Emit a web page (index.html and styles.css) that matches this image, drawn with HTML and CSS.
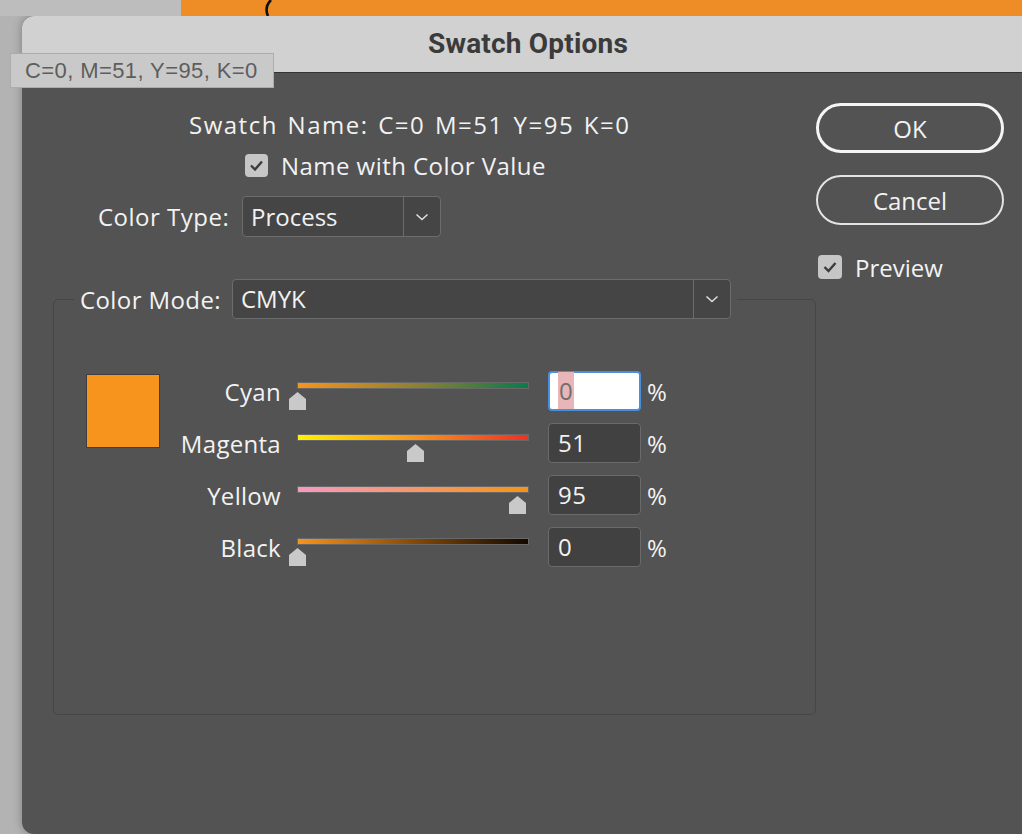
FILE: index.html
```html
<!DOCTYPE html>
<html lang="en">
<head>
    <meta charset="UTF-8">
    <title>Swatch Options</title>
    <link rel="stylesheet" href="styles.css">
</head>
<body>
    <div class="desk">
        <div class="desk-gap"></div>
        <div class="desk-doc">
            <svg width="12" height="16" viewBox="0 0 12 16"><path d="M8 0 Q1 7 5 16" fill="none" stroke="#111" stroke-width="2.6"/></svg>
        </div>
    </div>

    <div class="tooltip">C=0, M=51, Y=95, K=0</div>

    <div class="dialog">
        <div class="titlebar">Swatch Options</div>
        <div class="dialog-body">
            <div class="main">
                <div class="name-row">Swatch Name: C=0 M=51 Y=95 K=0</div>
                <div class="check-row">
                    <span class="check-box"><svg width="23" height="23" viewBox="0 0 23 23"><path d="M6 11.5 L10 15.5 L17 7.5" fill="none" stroke="#3c3c3c" stroke-width="2.4"/></svg></span>
                    <span>Name with Color Value</span>
                </div>
                <div class="type-row">
                    <span class="type-label">Color Type:</span>
                    <div class="select select-type">
                        <span class="select-value">Process</span>
                        <span class="select-arrow"><svg width="14" height="8" viewBox="0 0 14 8"><polyline points="1.5,1.5 7,6.5 12.5,1.5" fill="none" stroke="#dcdcdc" stroke-width="1.6"/></svg></span>
                    </div>
                </div>

                <fieldset class="mode">
                    <legend>
                        <div class="legend-inner">
                            <span class="mode-label">Color Mode:</span>
                            <div class="select select-mode">
                                <span class="select-value">CMYK</span>
                                <span class="select-arrow"><svg width="14" height="8" viewBox="0 0 14 8"><polyline points="1.5,1.5 7,6.5 12.5,1.5" fill="none" stroke="#dcdcdc" stroke-width="1.6"/></svg></span>
                            </div>
                        </div>
                    </legend>
                    <div class="mode-content">
                        <div class="swatch"></div>
                        <div class="channels">
                            <div class="channel">
                                <span class="channel-name">Cyan</span>
                                <div class="slider">
                                    <div class="track track-cyan"></div>
                                    <svg class="thumb" style="left: 0%" width="17" height="18" viewBox="0 0 17 18"><polygon points="8.5,0 17,7 17,18 0,18 0,7" fill="#c9c9c9"/></svg>
                                </div>
                                <div class="num num-focus"><span class="sel">0</span></div>
                                <span class="pct">%</span>
                            </div>
                            <div class="channel">
                                <span class="channel-name">Magenta</span>
                                <div class="slider">
                                    <div class="track track-magenta"></div>
                                    <svg class="thumb" style="left: 51%" width="17" height="18" viewBox="0 0 17 18"><polygon points="8.5,0 17,7 17,18 0,18 0,7" fill="#c9c9c9"/></svg>
                                </div>
                                <div class="num">51</div>
                                <span class="pct">%</span>
                            </div>
                            <div class="channel">
                                <span class="channel-name">Yellow</span>
                                <div class="slider">
                                    <div class="track track-yellow"></div>
                                    <svg class="thumb" style="left: 95%" width="17" height="18" viewBox="0 0 17 18"><polygon points="8.5,0 17,7 17,18 0,18 0,7" fill="#c9c9c9"/></svg>
                                </div>
                                <div class="num">95</div>
                                <span class="pct">%</span>
                            </div>
                            <div class="channel">
                                <span class="channel-name">Black</span>
                                <div class="slider">
                                    <div class="track track-black"></div>
                                    <svg class="thumb" style="left: 0%" width="17" height="18" viewBox="0 0 17 18"><polygon points="8.5,0 17,7 17,18 0,18 0,7" fill="#c9c9c9"/></svg>
                                </div>
                                <div class="num">0</div>
                                <span class="pct">%</span>
                            </div>
                        </div>
                    </div>
                </fieldset>
            </div>

            <div class="side">
                <button class="btn btn-default">OK</button>
                <button class="btn">Cancel</button>
                <div class="preview">
                    <span class="check-box check-box-lg"><svg width="24" height="24" viewBox="0 0 24 24"><path d="M6.5 12 L10.5 16 L17.5 8" fill="none" stroke="#3c3c3c" stroke-width="2.4"/></svg></span>
                    <span>Preview</span>
                </div>
            </div>
        </div>
    </div>
</body>
</html>
```

FILE: styles.css
```css
* {
    box-sizing: border-box;
}

body {
    margin: 0;
    width: 1022px;
    height: 834px;
    overflow: hidden;
    position: relative;
    background: #b3b3b3;
    font-family: 'Open Sans', 'Noto Sans', sans-serif;
}

/* what's behind the dialog */
.desk {
    display: flex;
    height: 16px;
}

.desk-gap {
    width: 181px;
    background: #bdbdbd;
}

.desk-doc {
    flex: 1;
    background: #ee8c25;
    padding-left: 82px;
}

.desk-doc svg {
    display: block;
}

.tooltip {
    position: absolute;
    left: 10px;
    top: 53px;
    width: 264px;
    height: 35px;
    background: #c9c9c9;
    border: 1px solid #acacac;
    color: #5d5d5d;
    font-family: 'Liberation Sans', Arial, sans-serif;
    font-size: 22px;
    letter-spacing: 0.4px;
    line-height: 33px;
    padding-left: 14px;
    z-index: 2;
}

.dialog {
    margin-left: 22px;
    width: 1012px;
    height: 818px;
    border-radius: 12px;
    overflow: hidden;
    background: #535353;
    box-shadow: 0 0 10px rgba(0, 0, 0, 0.3);
}

.titlebar {
    height: 57px;
    background: #d1d1d1;
    border-bottom: 1px solid #333;
    text-align: center;
    font-family: Roboto, sans-serif;
    font-weight: bold;
    font-size: 28px;
    letter-spacing: 0.2px;
    line-height: 56px;
    color: #3b3b3b;
}

.dialog-body {
    display: flex;
    color: #f2f2f2;
    font-size: 24px;
}

.main {
    width: 794px;
    padding-top: 37px;
}

.name-row {
    padding-left: 167px;
    height: 30px;
    line-height: 30px;
    letter-spacing: 1.5px;
    word-spacing: 2px;
}

.check-row {
    margin-top: 10px;
    padding-left: 223px;
    height: 30px;
    display: flex;
    align-items: center;
    gap: 13px;
    letter-spacing: 0.45px;
}

.check-box {
    width: 23px;
    height: 23px;
    background: #c6c6c6;
    border-radius: 4px;
    display: flex;
}

.check-box-lg {
    width: 24px;
    height: 24px;
}

.type-row {
    margin-top: 16px;
    padding-left: 76px;
    display: flex;
    align-items: center;
    gap: 11px;
}

.type-label {
    width: 133px;
    letter-spacing: 0.5px;
}

.select {
    display: flex;
    height: 41px;
    background: #454545;
    border: 1px solid #6c6c6c;
    border-radius: 4px;
}

.select-value {
    flex: 1;
    padding-left: 8px;
    line-height: 39px;
}

.select-arrow {
    width: 37px;
    border-left: 1px solid #6c6c6c;
    display: flex;
    align-items: center;
    justify-content: center;
}

.select-type {
    width: 199px;
}

.select-mode {
    width: 499px;
    height: 40px;
}

.select-mode .select-value {
    line-height: 38px;
}

/* Color Mode group */
.mode {
    margin: 42px 0 0 31px;
    width: 763px;
    height: 436px;
    border: 1px solid #464646;
    border-radius: 5px;
    padding: 0;
    min-width: 0;
}

.mode legend {
    margin-left: 20px;
    padding: 0 6px;
}

.legend-inner {
    display: flex;
    align-items: center;
    gap: 11px;
}

.mode-label {
    width: 141px;
    letter-spacing: 0.4px;
}

.mode-content {
    display: flex;
    margin-top: 52px;
    padding-left: 32px;
}

.swatch {
    width: 74px;
    height: 74px;
    margin-top: 3px;
    background: #f7941d;
    border: 1px solid #3f3f3f;
}

.channels {
    display: flex;
    flex-direction: column;
    gap: 12px;
}

.channel {
    display: flex;
    align-items: center;
    height: 40px;
}

.channel-name {
    width: 121px;
    text-align: right;
    letter-spacing: 0.3px;
}

.slider {
    position: relative;
    width: 232px;
    height: 40px;
    margin-left: 16px;
}

.track {
    margin-top: 11px;
    height: 7px;
    border: 1px solid #686868;
}

.track-cyan {
    background: linear-gradient(to right, #f7941d, #867f36 55%, #0a7a4c);
}

.track-magenta {
    background: linear-gradient(to right, #fff200, #f7941d 51%, #ee3124);
}

.track-yellow {
    background: linear-gradient(to right, #f49bc1, #f7941d 95%);
}

.track-black {
    background: linear-gradient(to right, #f7941d, #7a4308 55%, #120800);
}

.thumb {
    position: absolute;
    top: 21px;
    margin-left: -8.5px;
}

.num {
    width: 93px;
    height: 40px;
    margin-left: 19px;
    background: #414141;
    border: 1px solid #6a6a6a;
    border-radius: 4px;
    padding-left: 9px;
    line-height: 38px;
    letter-spacing: 0.6px;
}

.num-focus {
    background: #fff;
    border: 2px solid #4a8fdb;
    color: #6f6f6f;
    padding-left: 8px;
    line-height: 36px;
}

.sel {
    background: #e8b5b9;
    padding: 2px 1px;
}

.pct {
    margin-left: 6px;
}

/* buttons column */
.side {
    width: 188px;
    padding-top: 30px;
}

.btn {
    display: block;
    width: 188px;
    height: 50px;
    border: 2px solid #e4e4e4;
    border-radius: 25px;
    background: transparent;
    color: #f2f2f2;
    font-family: 'Open Sans', 'Noto Sans', sans-serif;
    font-size: 24px;
    padding: 0;
}

.btn-default {
    border: 3px solid #f5f5f5;
}

.btn + .btn {
    margin-top: 22px;
}

.preview {
    margin-top: 29px;
    padding-left: 2px;
    display: flex;
    align-items: center;
    gap: 13px;
    height: 26px;
}
```
